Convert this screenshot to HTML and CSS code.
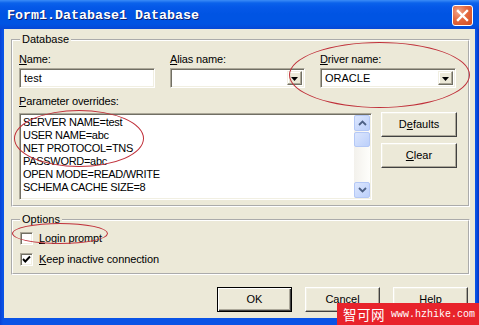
FILE: index.html
```html
<!DOCTYPE html>
<html>
<head>
<meta charset="utf-8">
<title>Form1.Database1 Database</title>
<link rel="stylesheet" href="styles.css">
</head>
<body>
<div class="window">
  <div class="titlebar">
    <span class="title">Form1.Database1 Database</span>
    <span class="close"><svg width="19" height="19" viewBox="0 0 19 19"><path d="M5 5 L14 14 M14 5 L5 14" stroke="#fff" stroke-width="2.4" stroke-linecap="square"/></svg></span>
  </div>
  <div class="client">
    <fieldset class="group db">
      <legend>Database</legend>
      <div class="fields">
        <div class="field">
          <div class="lbl"><u>N</u>ame:</div>
          <div class="edit">test</div>
        </div>
        <div class="field">
          <div class="lbl"><u>A</u>lias name:</div>
          <div class="edit combo"><span class="val"></span><span class="drop"><svg width="7" height="4" viewBox="0 0 7 4"><path d="M0 0 H7 L3.5 4 Z" fill="#000"/></svg></span></div>
        </div>
        <div class="field">
          <div class="lbl"><u>D</u>river name:</div>
          <div class="edit combo"><span class="val">ORACLE</span><span class="drop"><svg width="7" height="4" viewBox="0 0 7 4"><path d="M0 0 H7 L3.5 4 Z" fill="#000"/></svg></span></div>
        </div>
      </div>
      <div class="lbl plabel"><u>P</u>arameter overrides:</div>
      <div class="prow">
        <div class="memo">
          <div class="lines">
            <div>SERVER NAME=test</div>
            <div>USER NAME=abc</div>
            <div>NET PROTOCOL=TNS</div>
            <div>PASSWORD=abc</div>
            <div>OPEN MODE=READ/WRITE</div>
            <div>SCHEMA CACHE SIZE=8</div>
          </div>
          <div class="vscroll">
            <span class="sbtn"><svg width="9" height="6" viewBox="0 0 9 6"><path d="M1 5 L4.5 1.5 L8 5" fill="none" stroke="#4d6185" stroke-width="1.8"/></svg></span>
            <span class="thumb"></span>
            <span class="track"></span>
            <span class="sbtn"><svg width="9" height="6" viewBox="0 0 9 6"><path d="M1 1 L4.5 4.5 L8 1" fill="none" stroke="#4d6185" stroke-width="1.8"/></svg></span>
          </div>
        </div>
        <div class="side">
          <div class="btn">D<u>e</u>faults</div>
          <div class="btn"><u>C</u>lear</div>
        </div>
      </div>
    </fieldset>
    <fieldset class="group opts">
      <legend>Options</legend>
      <div class="check"><span class="box"></span><span><u>L</u>ogin prompt</span></div>
      <div class="check"><span class="box"><svg width="9" height="9" viewBox="0 0 9 9"><path d="M1 4 L3.3 6.5 L8 1.5" fill="none" stroke="#000" stroke-width="1.9"/></svg></span><span><u>K</u>eep inactive connection</span></div>
    </fieldset>
    <div class="buttons">
      <div class="btn default">OK</div>
      <div class="btn">Cancel</div>
      <div class="btn">Help</div>
    </div>
  </div>
  <div class="ellipse e1"></div>
  <div class="ellipse e2"></div>
  <div class="ellipse e3"></div>
  <div class="watermark"><span class="cn">智可网</span><span class="url">www.hzhike.com</span></div>
</div>
</body>
</html>
```
FILE: styles.css
```css
* { box-sizing: border-box; }
html, body { margin: 0; padding: 0; }
body {
  width: 479px;
  height: 325px;
  overflow: hidden;
  font-family: "Liberation Sans", Arial, sans-serif;
  font-size: 11px;
  color: #000;
  background: #fff;
}
u { text-decoration: underline; text-underline-offset: 1px; }

.window {
  position: relative;
  width: 479px;
  height: 325px;
  display: flex;
  flex-direction: column;
  background: linear-gradient(90deg, #0842d6 0, #0a53e6 3px, #0a53e6 476px, #0435c4 479px);
}
.titlebar {
  height: 29px;
  flex: none;
  display: flex;
  align-items: center;
  justify-content: space-between;
  padding: 0 6px 0 7px;
  background: linear-gradient(#3b8cf7 0, #0b62eb 3px, #0558e8 7px, #0054e3 14px, #0054e3 24px, #0648d6 29px);
}
.title {
  font-family: "Liberation Mono", monospace;
  font-weight: bold;
  font-size: 13.33px;
  color: #fff;
  text-shadow: 1px 1px 0 #0a1f73;
  padding-top: 1px;
}
.close {
  width: 21px;
  height: 21px;
  border: 1px solid #fff;
  border-radius: 3px;
  background: radial-gradient(circle at 30% 30%, #f0a58a 0, #e4683f 45%, #d24a1f 100%);
  display: flex;
  align-items: center;
  justify-content: center;
  margin-top: 1px;
}

.client {
  flex: 1;
  margin: 0 4px 7px 4px;
  background: #ece9d8;
  padding: 4px 5px 0 7px;
  display: flex;
  flex-direction: column;
}

fieldset.group {
  margin: 0;
  min-width: 0;
  border: 2px groove #fff;
  flex: none;
}
fieldset.group legend {
  padding: 0 2px;
  margin-left: 1px;
  line-height: 13px;
}

fieldset.db { padding: 7px 11px 5px 6px; }
.fields {
  display: grid;
  grid-template-columns: 136px 135px 136px;
  column-gap: 15px;
}
.lbl { line-height: 13px; height: 13px; margin-bottom: 2px; letter-spacing: -0.15px; }
.edit {
  height: 20px;
  background: #fff;
  border: 1px solid;
  border-color: #aca899 #fff #fff #aca899;
  box-shadow: inset 1px 1px 0 #716f64, inset -1px -1px 0 #f1efe2;
  padding: 3px 3px 0 4px;
  line-height: 13px;
}
.combo {
  display: flex;
  padding: 2px 2px 2px 4px;
  align-items: stretch;
}
.combo .val { flex: 1; padding-top: 1px; }
.drop {
  width: 15px;
  flex: none;
  background: #ece9d8;
  border: 1px solid;
  border-color: #f1efe2 #716f64 #716f64 #f1efe2;
  box-shadow: inset -1px -1px 0 #aca899, inset 1px 1px 0 #fff;
  display: flex;
  align-items: center;
  justify-content: center;
  padding-top: 1px;
}
.plabel { margin-top: 7px; margin-bottom: 5px; }
.prow { display: flex; gap: 9px; align-items: flex-start; }
.memo {
  width: 353px;
  height: 87px;
  background: #fff;
  border: 1px solid;
  border-color: #aca899 #fff #fff #aca899;
  box-shadow: inset 1px 1px 0 #716f64, inset -1px -1px 0 #f1efe2;
  padding: 1px 1px 1px 3px;
  display: flex;
}
.lines { flex: 1; line-height: 13px; letter-spacing: -0.3px; padding-top: 1px; }
.vscroll {
  width: 16px;
  display: flex;
  flex-direction: column;
  background: linear-gradient(90deg, #f3f1ec, #fefefb);
  gap: 1px;
}
.sbtn, .thumb {
  height: 16px;
  flex: none;
  background: linear-gradient(135deg, #dce6fd, #bcd0fb);
  border: 1px solid #b4c8f6;
  border-radius: 2px;
  display: flex;
  align-items: center;
  justify-content: center;
}
.thumb { height: 15px; }
.track { flex: 1; }

.side { display: flex; flex-direction: column; gap: 6px; margin-top: -1px; }
.btn {
  width: 76px;
  height: 25px;
  background: #ece9d8;
  border: 1px solid;
  border-color: #fff #404040 #404040 #fff;
  box-shadow: inset -1px -1px 0 #aca899, inset 1px 1px 0 #f1efe2;
  display: flex;
  align-items: center;
  justify-content: center;
  line-height: 13px;
}

fieldset.opts { margin-top: 6px; padding: 6px 8px 7px 7px; }
fieldset.opts legend { margin-left: 0; }
.check { display: flex; align-items: center; gap: 6px; height: 13px; line-height: 13px; letter-spacing: -0.1px; }
.check + .check { margin-top: 8px; }
.box {
  width: 13px;
  height: 13px;
  flex: none;
  background: #fff;
  border: 1px solid;
  border-color: #aca899 #fff #fff #aca899;
  box-shadow: inset 1px 1px 0 #716f64, inset -1px -1px 0 #f1efe2;
  display: flex;
  align-items: center;
  justify-content: center;
}

.buttons {
  display: flex;
  flex: none;
  justify-content: flex-end;
  gap: 13px;
  margin-top: 12px;
  padding-right: 2px;
}
.buttons .btn { width: 75px; }
.btn.default {
  border-color: #000;
  box-shadow: inset 1px 1px 0 #fff, inset -1px -1px 0 #404040, inset -2px -2px 0 #aca899;
}

.ellipse {
  position: absolute;
  border: 1px solid #c0303a;
  border-radius: 50%;
}
.e1 { left: 289px; top: 42px; width: 181px; height: 66px; }
.e2 { left: 14px; top: 110px; width: 130px; height: 57px; }
.e3 { left: 12px; top: 223px; width: 96px; height: 21px; }

.watermark {
  position: absolute;
  left: 337px;
  top: 303px;
  width: 142px;
  height: 22px;
  background: #e8232b;
  color: #fff;
  display: flex;
  align-items: center;
  padding-left: 6px;
  gap: 6px;
}
.cn { font-family: "Noto Sans CJK SC", sans-serif; font-size: 13.5px; letter-spacing: 0.5px; }
.url { font-family: "Liberation Mono", monospace; font-size: 10px; }
```
